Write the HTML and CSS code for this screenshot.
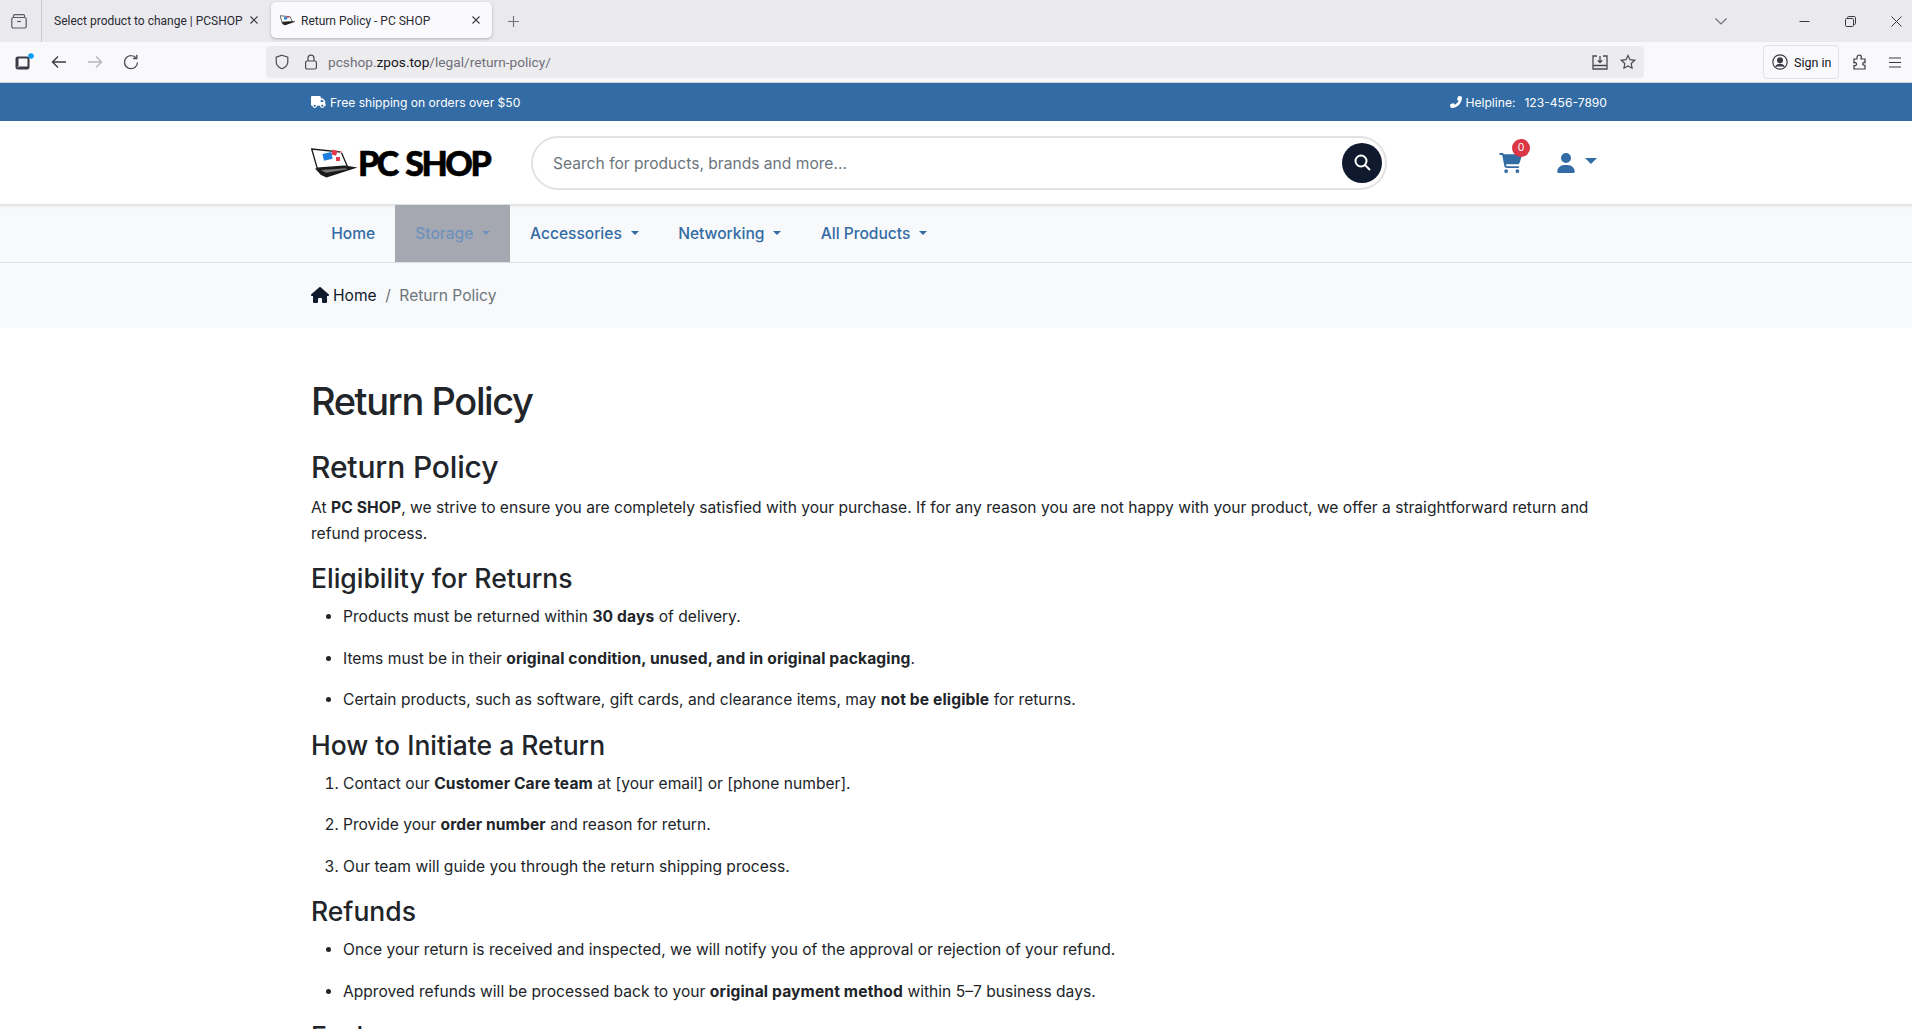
FILE: index.html
```html
<!DOCTYPE html>
<html lang="en">
<head>
<meta charset="utf-8">
<title>Return Policy - PC SHOP</title>
<link rel="stylesheet" href="styles.css">
</head>
<body>
<div class="tabbar">
  <div class="tabs-btn"><svg width="16" height="16" viewBox="0 0 16 16" fill="none" stroke="#5b5b66" stroke-width="1.2"><path d="M2.5 4V2.800c0-.7.5-1.200 1.200-1.200h8.600c.7 0 1.200.5 1.200 1.200V4"/><rect x=".8" y="4.500" width="14.400" height="10.500" rx="1.600"/><path d="M6 8.500h4"/></svg></div>
  <div class="tab"><span class="tab-title">Select product to change | PCSHOP</span><svg class="tab-x" width="10" height="10" viewBox="0 0 10 10" stroke="#3a3a44" stroke-width="1.100"><path d="M1.500 1.500l7 7M8.500 1.500l-7 7"/></svg></div>
  <div class="tab tab-active"><svg class="fav" width="16" height="11" viewBox="0 0 47 30"><path d="M0 1l30 3 6 14-30 2z" fill="#fff" stroke="#222" stroke-width="2"/><path d="M4 20l37-3 4 2-30 10-6-2z" fill="#222"/><rect x="12" y="5" width="9" height="7" fill="#1f7fe0"/><rect x="21" y="2" width="5" height="5" fill="#e33b4c"/></svg><span class="tab-title">Return Policy - PC SHOP</span><svg class="tab-x" width="10" height="10" viewBox="0 0 10 10" stroke="#3a3a44" stroke-width="1.100"><path d="M1.500 1.500l7 7M8.500 1.500l-7 7"/></svg></div>
  <svg class="plus" width="11" height="11" viewBox="0 0 11 11" stroke="#6e6e78" stroke-width="1.100"><path d="M5.500 0v11M0 5.500h11"/></svg>
  <div class="spacer"></div>
  <svg class="chev" width="12" height="7" viewBox="0 0 12 7" fill="none" stroke="#6e6e78" stroke-width="1.100"><path d="M.5.5L6 6 11.500.5"/></svg>
  <div class="win-btn"><svg width="11" height="11" viewBox="0 0 11 11" stroke="#3a3a44"><path d="M.5 5.500h10"/></svg></div>
  <div class="win-btn"><svg width="11" height="11" viewBox="0 0 11 11" fill="none" stroke="#3a3a44"><rect x=".5" y="2.500" width="8" height="8" rx="1.200"/><path d="M2.500 2.500V1.700c0-.7.5-1.200 1.200-1.200h5.600c.7 0 1.200.5 1.200 1.200v5.600c0 .7-.5 1.200-1.200 1.200H8.500"/></svg></div>
  <div class="win-btn"><svg width="11" height="11" viewBox="0 0 11 11" stroke="#3a3a44"><path d="M.5.500l10 10M10.500.500l-10 10"/></svg></div>
</div>
<div class="toolbar">
  <svg class="view-ico" width="20" height="18" viewBox="0 0 20 18" fill="none"><rect x="1.500" y="4.500" width="12" height="11" rx="1.500" stroke="#3a3a44" stroke-width="2"/><path d="M1.500 5v10h2V5zM2 13.500h11v2H2z" fill="#3a3a44"/><circle cx="16" cy="3" r="2.800" fill="#0a9bf5"/></svg>
  <svg class="back-ico" width="16" height="14" viewBox="0 0 16 14" fill="none" stroke="#3a3a44" stroke-width="1.300"><path d="M15 7H1.500M7 1.500L1.500 7 7 12.500"/></svg>
  <svg class="fwd-ico" width="16" height="14" viewBox="0 0 16 14" fill="none" stroke="#b4b4ba" stroke-width="1.300"><path d="M1 7h13.500M9 1.500L14.500 7 9 12.500"/></svg>
  <svg class="fwd-ico" width="16" height="16" viewBox="0 0 16 16" fill="none" stroke="#4a4a54" stroke-width="1.300"><path d="M14.500 8.500A6.500 6.500 0 1 1 8.500 1.700c2 0 3.500.9 4.800 2.400"/><path d="M13.800.8v3.700h-3.700"/></svg>
  <div class="urlbar">
    <svg class="shield" width="16" height="16" viewBox="0 0 16 16" fill="none" stroke="#4a4a54" stroke-width="1.200"><path d="M8 1.200l5.800 1.900v4.600c0 3.500-2.600 5.800-5.800 7.100-3.200-1.300-5.800-3.600-5.800-7.100V3.100z"/></svg>
    <svg class="lock" width="14" height="16" viewBox="0 0 14 16" fill="none" stroke="#4a4a54" stroke-width="1.200"><rect x="1.600" y="7" width="10.800" height="8" rx="1.500"/><path d="M4 7V4.200a3 3 0 0 1 6 0V7"/></svg>
    <span class="url"><span class="url-dim">pcshop.</span>zpos.top<span class="url-dim">/legal/return-policy/</span></span>
    <div class="spacer"></div>
    <svg width="16" height="15" viewBox="0 0 16 15" fill="none" stroke="#4a4a54" stroke-width="1.300"><path d="M5 1H1v13h14V1h-4M1 10.500h14M8 1v6M5.800 5.200L8 7.600l2.200-2.400"/></svg>
    <svg class="star" width="16" height="16" viewBox="0 0 16 16" fill="none" stroke="#4a4a54" stroke-width="1.200"><path d="M8 1.400l2 4.300 4.700.6-3.500 3.200.9 4.700L8 11.900l-4.100 2.300.9-4.700-3.500-3.200 4.700-.6z"/></svg>
  </div>
  <div class="signin"><svg width="16" height="16" viewBox="0 0 16 16" fill="none" stroke="#3a3a44" stroke-width="1.200"><circle cx="8" cy="8" r="7.200"/><circle cx="8" cy="6.300" r="2.400" fill="#3a3a44"/><path d="M3.600 12.600c1-1.800 2.600-2.300 4.400-2.300s3.400.5 4.400 2.300" fill="#3a3a44"/></svg><span>Sign in</span></div>
  <svg class="puzzle" width="14" height="16" viewBox="0 0 14 16" fill="none" stroke="#3a3a44" stroke-width="1.200"><path d="M1 5h3c.4-1-.2-1.500.2-2.500C4.700 1.300 6.300.8 7.300 1.300c1.400.6 1.100 2.400.7 3.700h4v3.600c-1-.3-1.400-.3-2 .4-.7 1 0 2.500 2 2.400V15H1v-3.500c1.500.5 3-.5 2.500-2C3.200 8.500 2 8.300 1 8.800z"/></svg>
  <svg class="menu" width="12" height="11" viewBox="0 0 12 11" stroke="#3a3a44" stroke-width="1.200"><path d="M0 1h12M0 5.500h12M0 10h12"/></svg>
</div>
<div class="topbar">
  <div class="container topbar-row">
    <span class="topbar-item"><svg width="15" height="12" viewBox="0 0 640 512" fill="#fff"><path d="M48 0C21.500 0 0 21.500 0 48V368c0 26.500 21.500 48 48 48h16c0 53 43 96 96 96s96-43 96-96H384c0 53 43 96 96 96s96-43 96-96h32c17.700 0 32-14.300 32-32s-14.300-32-32-32V288 256 237.300c0-17-6.700-33.300-18.700-45.300L512 114.700c-12-12-28.300-18.700-45.300-18.700H416V48c0-26.500-21.500-48-48-48H48zM416 160h50.700L544 237.300V256H416V160zM112 416a48 48 0 1 1 96 0 48 48 0 1 1-96 0zm368-48a48 48 0 1 1 0 96 48 48 0 1 1 0-96z"/></svg>Free shipping on orders over $50</span>
    <span class="topbar-item"><svg class="phone-ico" width="12" height="12" viewBox="0 0 512 512" fill="#fff"><path d="M164.900 24.600c-7.700-18.600-28-28.500-47.400-23.200l-88 24C12.100 30.200 0 46 0 64C0 311.400 200.600 512 448 512c18 0 33.800-12.100 38.600-29.500l24-88c5.300-19.400-4.600-39.700-23.200-47.400l-96-40c-16.300-6.800-35.200-2.100-46.300 11.600L304.700 368C234.300 334.700 177.300 277.700 144 207.300L193.300 167c13.700-11.200 18.400-30 11.600-46.300l-40-96z"/></svg>Helpline: <span class="phone">123-456-7890</span></span>
  </div>
</div>
<header class="site-header">
  <div class="container header-row">
    <div class="logo">
      <svg width="47" height="30" viewBox="0 0 47 30"><path d="M.7 1l29.500 3 6 14-30 2.200z" fill="#fff" stroke="#1a1a1a" stroke-width="1.300"/><path d="M4 20.500l33-2.500 9.500 1.500-31 10-5.500-2.500z" fill="#1a1a1a"/><path d="M10 22l24-1.800 3 1-22 3.500z" fill="#777"/><rect x="12" y="5" width="9" height="7" fill="#1f7fe0" transform="rotate(-12 16 8)"/><rect x="21" y="2" width="5" height="5" fill="#e33b4c" transform="rotate(15 23 4)"/><rect x="25" y="9" width="4" height="4" fill="#e33b4c"/><rect x="29" y="3" width="2" height="2" fill="#f08a96"/></svg>
      <span class="logo-text">PC SHOP</span>
    </div>
    <div class="search"><span class="search-ph">Search for products, brands and more...</span><span class="search-btn"><svg width="17" height="17" viewBox="0 0 17 17" fill="none" stroke="#fff" stroke-width="2"><circle cx="7" cy="7" r="5.500"/><path d="M11 11l5 5"/></svg></span></div>
    <div class="cart"><svg width="23" height="20" viewBox="0 0 576 512" fill="#336ca5"><path d="M0 24C0 10.700 10.700 0 24 0H69.500c22 0 41.500 12.800 50.600 32h411c26.300 0 45.500 25 38.600 50.400l-41 152.300c-8.500 31.400-37 53.300-69.500 53.300H170.700l5.400 28.500c2.200 11.300 12.100 19.500 23.600 19.500H488c13.300 0 24 10.700 24 24s-10.700 24-24 24H199.700c-34.600 0-64.300-24.600-70.700-58.500L77.400 54.500c-.7-3.800-4-6.500-7.900-6.500H24C10.700 48 0 37.300 0 24zM128 464a48 48 0 1 1 96 0 48 48 0 1 1-96 0zm336-48a48 48 0 1 1 0 96 48 48 0 1 1 0-96z"/></svg><span class="badge">0</span></div>
    <div class="user"><svg width="18" height="20" viewBox="0 0 448 512" fill="#336ca5"><path d="M224 256A128 128 0 1 0 224 0a128 128 0 1 0 0 256zm-45.700 48C79.800 304 0 383.800 0 482.300C0 498.700 13.300 512 29.700 512H418.300c16.400 0 29.700-13.300 29.700-29.700C448 383.800 368.200 304 269.700 304H178.300z"/></svg><span class="caret caret-lg"></span></div>
  </div>
</header>
<nav class="navbar">
  <div class="container nav-row">
    <a class="nav-link nav-home">Home</a>
    <a class="nav-link nav-hover">Storage<span class="caret"></span></a>
    <a class="nav-link">Accessories<span class="caret"></span></a>
    <a class="nav-link">Networking<span class="caret"></span></a>
    <a class="nav-link">All Products<span class="caret"></span></a>
  </div>
</nav>
<div class="crumbs">
  <div class="container crumb-row">
    <svg class="home-ico" width="18" height="16" viewBox="0 0 576 512" fill="#0f1a2e"><path d="M575.800 255.500c0 18-15 32.100-32 32.100h-32l.7 160.200c0 2.700-.2 5.400-.5 8.100V472c0 22.100-17.900 40-40 40H456c-1.100 0-2.200 0-3.300-.1c-1.400.1-2.800.1-4.200.1H416 392c-22.100 0-40-17.900-40-40V448 384c0-17.700-14.300-32-32-32H256c-17.700 0-32 14.300-32 32v64 24c0 22.100-17.900 40-40 40H160 128.100c-1.500 0-3-.1-4.500-.2c-1.200.1-2.400.2-3.600.2H104c-22.100 0-40-17.900-40-40V360c0-.9 0-1.900.1-2.800V287.600H32c-18 0-32-14-32-32.100c0-9 3-17 10-24L266.400 8c7-7 15-8 22-8s15 2 21 7L564.800 231.500c8 7 12 15 11 24z"/></svg>
    <span class="crumb-home">Home</span><span class="crumb-sep">/</span><span class="crumb-cur">Return Policy</span>
  </div>
</div>
<main class="container content">
  <h1>Return Policy</h1>
  <h2>Return Policy</h2>
  <p>At <strong>PC SHOP</strong>, we strive to ensure you are completely satisfied with your purchase. If for any reason you are not happy with your product, we offer a straightforward return and refund process.</p>
  <h3>Eligibility for Returns</h3>
  <ul>
    <li><p>Products must be returned within <strong>30 days</strong> of delivery.</p></li>
    <li><p>Items must be in their <strong>original condition, unused, and in original packaging</strong>.</p></li>
    <li><p>Certain products, such as software, gift cards, and clearance items, may <strong>not be eligible</strong> for returns.</p></li>
  </ul>
  <h3>How to Initiate a Return</h3>
  <ol>
    <li><p>Contact our <strong>Customer Care team</strong> at [your email] or [phone number].</p></li>
    <li><p>Provide your <strong>order number</strong> and reason for return.</p></li>
    <li><p>Our team will guide you through the return shipping process.</p></li>
  </ol>
  <h3>Refunds</h3>
  <ul>
    <li><p>Once your return is received and inspected, we will notify you of the approval or rejection of your refund.</p></li>
    <li><p>Approved refunds will be processed back to your <strong>original payment method</strong> within 5–7 business days.</p></li>
  </ul>
  <h3>Exchanges</h3>
</main>
</body>
</html>
```
FILE: styles.css
```css
* { box-sizing: border-box; }
html, body { margin: 0; height: 100%; overflow: hidden; }
body { width: 1912px; height: 1029px; background: #fff; color: #212529; font-family: "Inter", "Liberation Sans", sans-serif; font-size: 15.600px; }
.spacer { flex: 1; }
svg { flex: none; display: block; }

.tabbar { height: 42px; background: #e9e9ee; display: flex; align-items: center; font-size: 12px; color: #2b2b33; font-family: "Roboto", sans-serif; }
.tabs-btn { width: 42px; height: 42px; padding: 13px 0 0 11px; border-right: 1px solid #c8c8ce; flex: none; }
.tab { width: 224px; height: 36px; align-self: flex-start; margin-top: 2px; padding-left: 12px; display: flex; align-items: center; gap: 6px; flex: none; }
.tab-title { flex: 1; white-space: nowrap; padding-top: 1px; }
.tab-x { margin-right: 11px; }
.tab-active { width: 221px; margin-left: 5px; padding-left: 9px; gap: 5px; background: #fafafc; border-radius: 5px; box-shadow: 0 1px 3px rgba(0,0,0,.25); }
.plus { margin-left: 16px; }
.chev { margin-right: 54px; }
.win-btn { width: 46px; display: flex; justify-content: center; flex: none; }
.win-btn:last-child { margin-right: -7px; }

.toolbar { height: 41px; background: #f9f9fb; border-bottom: 1px solid #cfcfd4; display: flex; align-items: center; }
.view-ico { margin-left: 15px; }
.back-ico { margin-left: 16px; }
.fwd-ico { margin-left: 20px; }
.urlbar { width: 1378px; height: 32px; margin-left: 127px; background: #ececef; border-radius: 4px; display: flex; align-items: center; padding: 0 8px; font-family: "Roboto", sans-serif; font-size: 13.700px; color: #15141a; flex: none; }
.lock { margin-left: 14px; }
.url { margin-left: 10px; }
.url-dim { color: #6f6f78; }
.star { margin-left: 12px; }
.signin { height: 34px; width: 76px; margin-left: 119px; border: 1px solid #e2e2e6; border-radius: 4px; display: flex; align-items: center; gap: 6px; padding-left: 8px; font-family: "Roboto", sans-serif; font-size: 12.500px; color: #15141a; flex: none; }
.puzzle { margin-left: 14px; }
.menu { margin-left: 22px; }

.container { width: 1296px; margin-left: 311px; }
.topbar { height: 38px; background: #336ca5; color: #fff; font-size: 12.100px; display: flex; align-items: center; }
.topbar-row { display: flex; justify-content: space-between; }
.topbar-item { display: flex; align-items: center; gap: 4px; }
.phone-ico { transform: scaleX(-1); }
.phone { margin-left: 5px; }

.site-header { height: 84px; background: #fff; border-bottom: 1px solid #dee2e6; }
.header-row { height: 83px; display: flex; align-items: center; }
.logo { width: 220px; display: flex; align-items: center; flex: none; }
.logo-text { font-family: "Lato", "Liberation Sans", sans-serif; font-weight: 900; font-size: 34px; color: #000; letter-spacing: -2.500px; word-spacing: 3px; white-space: nowrap; -webkit-text-stroke: .6px #000; }
.search { width: 856px; height: 54px; border: 2px solid #e2e2e2; border-radius: 27px; display: flex; align-items: center; justify-content: space-between; padding: 0 3px 0 20px; color: #6c757d; flex: none; }
.search-ph { padding-top: 2px; }
.search-btn { width: 40px; height: 40px; border-radius: 50%; background: #0f1a2e; display: flex; align-items: center; justify-content: center; }
.cart { position: relative; margin-left: 112px; }
.badge { position: absolute; top: -14px; right: -8px; width: 18px; height: 18px; border-radius: 50%; background: #dc3545; color: #fff; font-size: 10.500px; display: flex; align-items: center; justify-content: center; }
.user { margin-left: 35px; display: flex; align-items: center; gap: 10px; }
.caret { display: inline-block; margin-left: 9px; border-top: 4.800px solid currentColor; border-left: 4.800px solid transparent; border-right: 4.800px solid transparent; }
.caret-lg { margin-left: 0; color: #336ca5; border-top-width: 6px; border-left-width: 6px; border-right-width: 6px; margin-top: -3px; }

.navbar { height: 58px; background: #f8f9fa; border-bottom: 1px solid #dee2e6; box-shadow: inset 0 4px 4px -4px rgba(0,0,0,.15); }
.nav-row { display: flex; height: 57px; }
.nav-link { padding: 0 19.700px; display: flex; align-items: center; color: #336ca5; font-weight: 500; letter-spacing: -.030px; }
.nav-link .caret { margin-top: -2px; }
.nav-home { padding: 0 20.200px; }
.nav-hover { background: #a6a8b1; color: #6d92bd; padding: 0 20px; }

.crumbs { height: 65px; background: #f8f9fa; }
.crumb-row { height: 65px; display: flex; align-items: center; }
.home-ico { margin-top: -2px; }
.crumb-home { margin-left: 4px; color: #0f1a2e; }
.crumb-sep { margin: 0 8.500px; color: #6c757d; }
.crumb-cur { color: #6c757d; }

.content { padding-top: 49px; }
h1 { margin: 0 0 23px; font-size: 38px; font-weight: 500; line-height: 48px; letter-spacing: -1.400px; }
h2 { margin: 0 0 9px; font-size: 30px; font-weight: 500; line-height: 38.400px; letter-spacing: -.150px; }
h3 { margin: -1px 0 9px; font-size: 26.500px; font-weight: 500; line-height: 33.600px; }
ul + h3, ol + h3 { margin: 0 0 8px; }
p { margin: 0 0 16px; line-height: 25.600px; }
strong { font-weight: 700; letter-spacing: .130px; }
ul, ol { margin: 0; padding-left: 32px; }
```
